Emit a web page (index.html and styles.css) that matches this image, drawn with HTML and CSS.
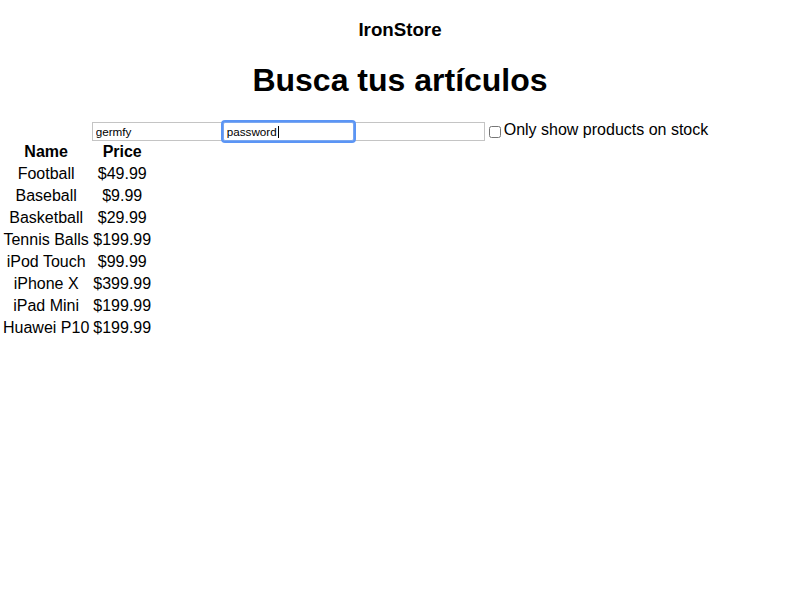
FILE: index.html
```html
<!DOCTYPE html>
<html lang="es">
<head>
<meta charset="utf-8">
<title>IronStore</title>
<link rel="stylesheet" href="styles.css">
</head>
<body>
<div class="app">
  <h3 class="brand">IronStore</h3>
  <h1 class="title">Busca tus artículos</h1>
  <div class="search-row"><input class="field" type="text" value="germfy"><span class="focus-wrap"><input class="field field-focus" type="text" value="password"><span class="caret"></span></span><input class="field" type="text" value=""><input class="check" type="checkbox"><span class="check-label">Only show products on stock</span></div>
  <table class="products">
    <thead>
      <tr><th>Name</th><th>Price</th></tr>
    </thead>
    <tbody>
      <tr><td>Football</td><td>$49.99</td></tr>
      <tr><td>Baseball</td><td>$9.99</td></tr>
      <tr><td>Basketball</td><td>$29.99</td></tr>
      <tr><td>Tennis Balls</td><td>$199.99</td></tr>
      <tr><td>iPod Touch</td><td>$99.99</td></tr>
      <tr><td>iPhone X</td><td>$399.99</td></tr>
      <tr><td>iPad Mini</td><td>$199.99</td></tr>
      <tr><td>Huawei P10</td><td>$199.99</td></tr>
    </tbody>
  </table>
</div>
</body>
</html>
```
FILE: styles.css
```css
html, body {
  margin: 0;
  padding: 0;
  background: #ffffff;
}
body {
  font-family: "Liberation Sans", Arial, sans-serif;
  font-size: 16px;
  color: #000;
}
.brand {
  font-size: 18.72px;
  font-weight: bold;
  text-align: center;
  margin: 18.72px 0;
}
.title {
  font-size: 32px;
  font-weight: bold;
  text-align: center;
  margin: 21.44px 0;
}
.search-row {
  display: flex;
  justify-content: center;
  align-items: flex-start;
  height: 19px;
}
.field {
  box-sizing: border-box;
  width: 131px;
  height: 19px;
  margin: 1px 0 0 0;
  padding: 1px 3px;
  border: 1px solid #c4c4c4;
  font-family: "Liberation Sans", Arial, sans-serif;
  font-size: 11.7px;
  color: #000;
  outline: none;
  background: #fff;
}
.focus-wrap {
  position: relative;
  display: block;
  height: 20px;
}
.field-focus {
  display: block;
  border-color: #7aa7f0;
  border-radius: 2px;
  box-shadow: 0 0 0 2px #5b95f5;
}
.caret {
  position: absolute;
  left: 55px;
  top: 5px;
  width: 1px;
  height: 12px;
  background: #000;
}
.check {
  width: 12px;
  height: 12px;
  margin: 5px 3px 0 4px;
}
.check-label {
  font-size: 16px;
  line-height: 18px;
  white-space: nowrap;
}
.products {
  border-spacing: 2px;
  margin-top: 0;
}
.products th,
.products td {
  padding: 1px;
  text-align: center;
  font-size: 16px;
  line-height: 18px;
}
.products th {
  font-weight: bold;
}
```
